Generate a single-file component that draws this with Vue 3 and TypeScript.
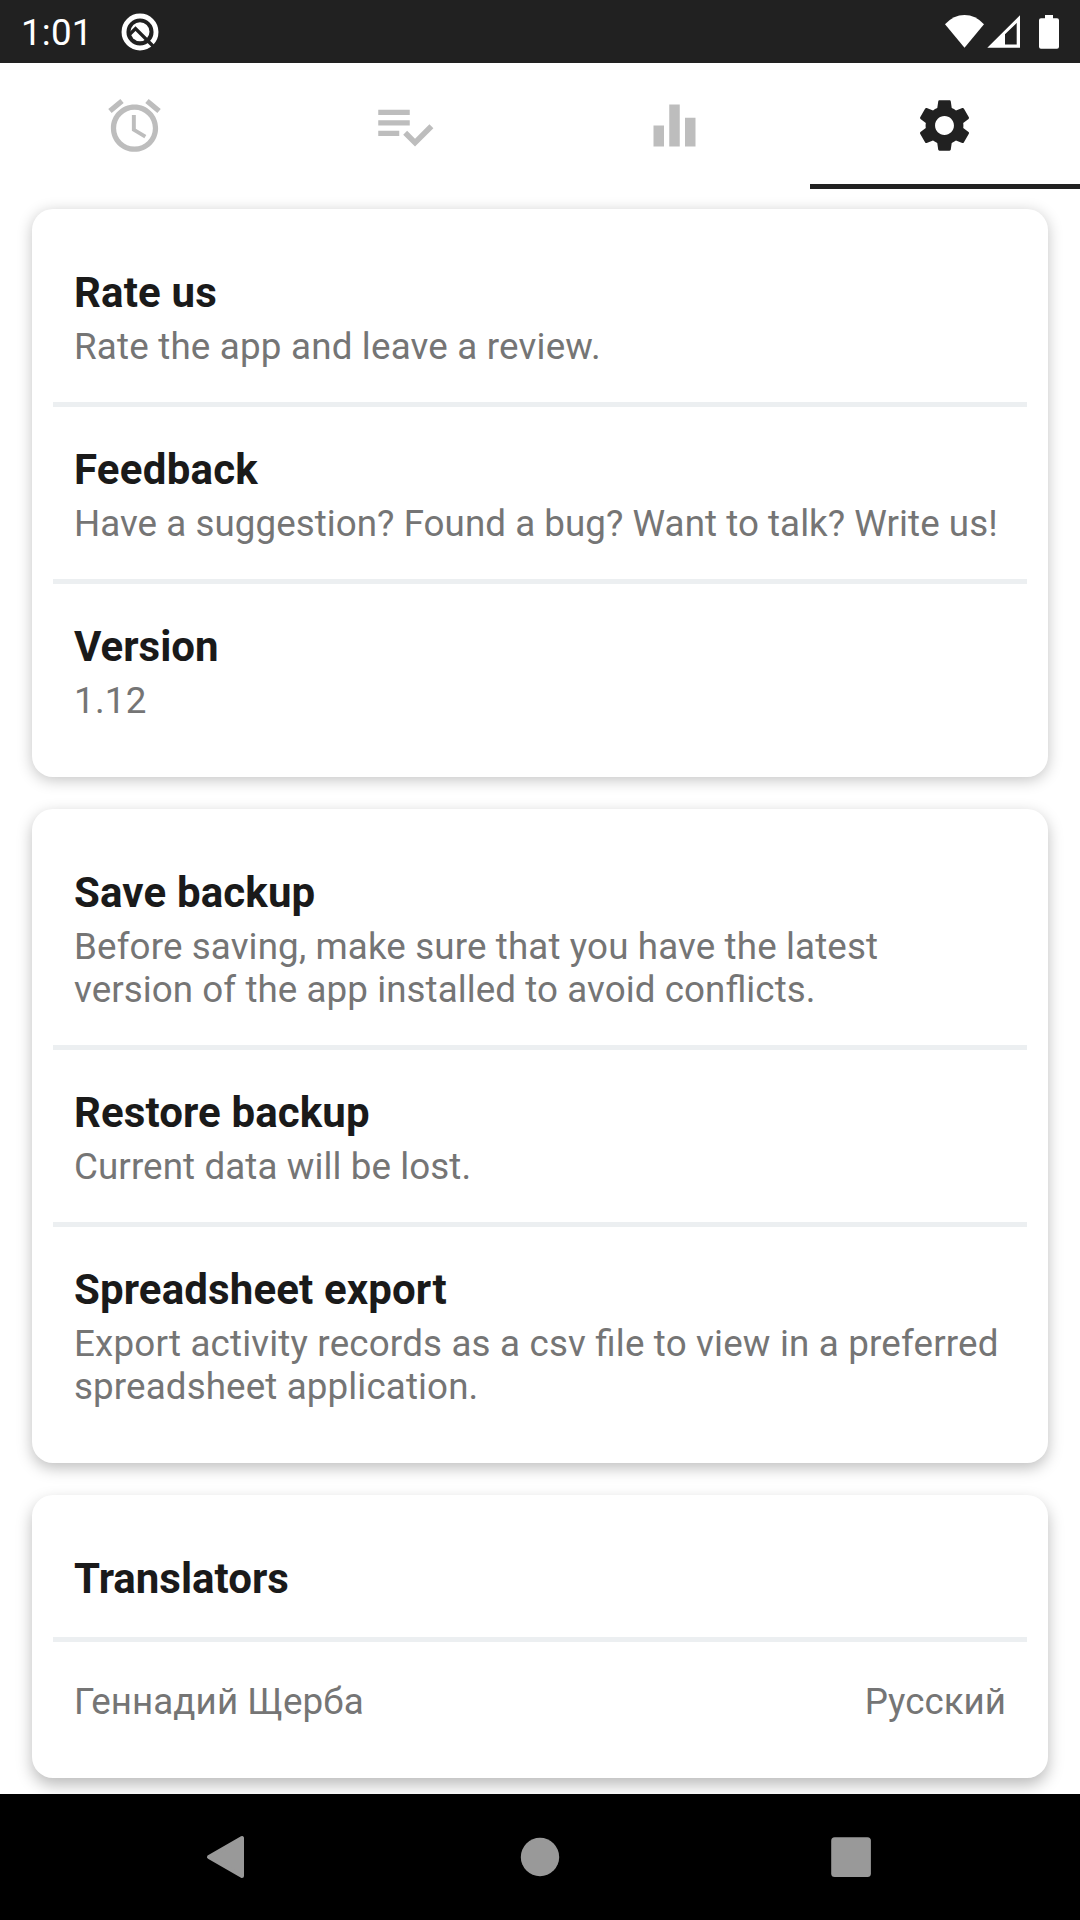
<script setup lang="ts">
interface Tab {
  name: string
  path: string
  active?: boolean
}
interface Line {
  text: string
  track: number
}
interface Item {
  title: string
  track: number
  lines: Line[]
}

const tabs: Tab[] = [
  {
    name: 'timers',
    path: 'M22 5.72l-4.6-3.86-1.29 1.53 4.6 3.86L22 5.72zM7.88 3.39L6.6 1.86 2 5.71l1.29 1.53 4.59-3.85zM12.5 8H11v6l4.75 2.85.75-1.23-4-2.37V8zM12 4c-4.97 0-9 4.03-9 9s4.02 9 9 9c4.97 0 9-4.03 9-9s-4.03-9-9-9zm0 16c-3.87 0-7-3.13-7-7s3.13-7 7-7 7 3.13 7 7-3.13 7-7 7z',
  },
  {
    name: 'records',
    path: 'M14 10H2v2h12v-2zm0-4H2v2h12V6zM2 16h8v-2H2v2zm19.5-4.5L23 13l-6.99 7-4.51-4.5L13 14l3.01 3 5.49-5.5z',
  },
  { name: 'statistics', path: 'M10 20h4V4h-4v16zm-6 0h4v-8H4v8zM16 9v11h4V9h-4z' },
  {
    name: 'settings',
    active: true,
    path: 'M19.14 12.94c.04-.3.06-.61.06-.94 0-.32-.02-.64-.07-.94l2.03-1.58c.18-.14.23-.41.12-.61l-1.92-3.32c-.12-.22-.37-.29-.59-.22l-2.39.96c-.5-.38-1.03-.7-1.62-.94l-.36-2.54c-.04-.24-.24-.41-.48-.41h-3.84c-.24 0-.43.17-.47.41l-.36 2.54c-.59.24-1.13.57-1.62.94l-2.39-.96c-.22-.08-.47 0-.59.22L2.74 8.87c-.12.21-.08.47.12.61l2.03 1.58c-.05.3-.09.63-.09.94s.02.64.07.94l-2.03 1.58c-.18.14-.23.41-.12.61l1.92 3.32c.12.22.37.29.59.22l2.39-.96c.5.38 1.03.7 1.62.94l.36 2.54c.05.24.24.41.48.41h3.84c.24 0 .44-.17.47-.41l.36-2.54c.59-.24 1.13-.56 1.62-.94l2.39.96c.22.08.47 0 .59-.22l1.92-3.32c.12-.22.07-.47-.12-.61l-2.01-1.58zM12 15.6c-1.98 0-3.6-1.62-3.6-3.6s1.62-3.6 3.6-3.6 3.6 1.62 3.6 3.6-1.62 3.6-3.6 3.6z',
  },
]

// track: letter spacing in px for each run of text
const groups: Item[][] = [
  [
    { title: 'Rate us', track: 0.15, lines: [{ text: 'Rate the app and leave a review.', track: 0.19 }] },
    {
      title: 'Feedback',
      track: 0.25,
      lines: [{ text: 'Have a suggestion? Found a bug? Want to talk? Write us!', track: 0.04 }],
    },
    { title: 'Version', track: 0, lines: [{ text: '1.12', track: 0.25 }] },
  ],
  [
    {
      title: 'Save backup',
      track: 0.15,
      lines: [
        { text: 'Before saving, make sure that you have the latest', track: 0.13 },
        { text: 'version of the app installed to avoid conflicts.', track: 0.07 },
      ],
    },
    { title: 'Restore backup', track: 0.1, lines: [{ text: 'Current data will be lost.', track: 0.09 }] },
    {
      title: 'Spreadsheet export',
      track: 0.13,
      lines: [
        { text: 'Export activity records as a csv file to view in a preferred', track: 0.17 },
        { text: 'spreadsheet application.', track: 0.12 },
      ],
    },
  ],
]

const translators = [{ name: 'Геннадий Щерба', language: 'Русский', track: 0.08 }]

const spacing = (track: number) => ({ letterSpacing: `${track}px` })
</script>

<template>
  <div class="screen">
    <header class="status">
      <span class="clock">1:01</span>
      <svg class="q-icon" width="38" height="38" viewBox="0 0 38 38">
        <circle cx="19" cy="19" r="16" fill="none" stroke="#fff" stroke-width="4.9" />
        <circle cx="19" cy="18.700" r="9.500" fill="#fff" />
        <path d="M8.500 21.500L14.500 15.500L33 34" fill="none" stroke="#212121" stroke-width="3.300" />
      </svg>
      <svg class="system" width="116" height="36" viewBox="944 13 116 36">
        <path d="M945 23.300Q953.500 14 964.500 14T984 23.300L964.500 46.700z" fill="#fff" />
        <path
          d="M987.300 46.700L1020 14.300V46.700zM1005 33.300V43.500H1016.700V22z"
          fill="#fff"
          fill-rule="evenodd"
        />
        <path
          d="M1045 14h8v3.300h4a2 2 0 0 1 2 2V45.800a2 2 0 0 1-2 2h-16a2 2 0 0 1-2-2V19.300a2 2 0 0 1 2-2h4z"
          fill="#fff"
        />
      </svg>
    </header>

    <nav class="tabs">
      <div v-for="tab in tabs" :key="tab.name" class="tab" :class="{ active: tab.active }">
        <svg width="63" height="63" viewBox="0 0 24 24"><path :d="tab.path" fill="currentColor" /></svg>
      </div>
    </nav>

    <main class="content">
      <section v-for="(group, g) in groups" :key="g" class="card" :class="`level-${g + 1}`">
        <div v-for="item in group" :key="item.title" class="item">
          <h2 :style="spacing(item.track)">{{ item.title }}</h2>
          <p>
            <span v-for="line in item.lines" :key="line.text" class="line" :style="spacing(line.track)">{{
              line.text
            }}</span>
          </p>
        </div>
      </section>
      <section class="card level-3">
        <div class="item"><h2>Translators</h2></div>
        <div v-for="person in translators" :key="person.name" class="item person">
          <span :style="spacing(person.track)">{{ person.name }}</span>
          <span>{{ person.language }}</span>
        </div>
      </section>
    </main>

    <footer class="navbar">
      <svg width="1080" height="126" viewBox="0 0 1080 126">
        <g fill="#999">
          <path d="M209 63L242 44V82z" stroke="#999" stroke-width="4" stroke-linejoin="round" />
          <circle cx="540" cy="63" r="19.200" />
          <rect x="831.200" y="43.200" width="39.700" height="39.700" rx="3.500" />
        </g>
      </svg>
    </footer>
  </div>
</template>

<style>
body {
  margin: 0;
  background: #fff;
}
</style>

<style scoped>
.screen {
  display: flex;
  flex-direction: column;
  width: 1080px;
  height: 1920px;
  overflow: hidden;
  background: #fff;
  font-family: Roboto, sans-serif;
  font-feature-settings: 'liga' 1;
}
.status {
  display: flex;
  align-items: center;
  flex: 0 0 63px;
  box-sizing: border-box;
  padding: 0 20px 0 21px;
  background: #212121;
}
.clock {
  width: 100px;
  padding-top: 2px;
  font-size: 36.75px;
  line-height: 43px;
  letter-spacing: 0.2px;
  color: #fff;
}
.q-icon {
  display: block;
}
.system {
  display: block;
  margin-left: auto;
}
.tabs {
  display: flex;
  flex: 0 0 126px;
}
.tab {
  display: flex;
  flex: 1;
  align-items: center;
  justify-content: center;
  box-sizing: border-box;
  color: #bdbdbd;
}
.tab svg {
  display: block;
  margin: 0 1px 1px 0;
}
.tab.active {
  color: #212121;
  box-shadow: inset 0 -5px #212121;
}
.content {
  display: flex;
  flex: 1;
  flex-direction: column;
  gap: 32px;
  padding: 20px 32px 0;
  overflow: hidden;
}
.card {
  flex: none;
  box-sizing: border-box;
  padding: 21px;
  border-radius: 21px;
  background: #fff;
}
.level-1 {
  box-shadow: 0 3px 15px rgba(0, 0, 0, 0.24);
}
.level-2 {
  box-shadow: 0 5px 15px rgba(0, 0, 0, 0.26);
}
.level-3 {
  box-shadow: 0 7px 16px rgba(0, 0, 0, 0.27);
}
.item {
  padding: 38px 21px 34px;
  font-size: 36.75px;
  line-height: 43px;
  color: #757575;
}
.item + .item {
  border-top: 5px solid #eceff1;
}
h2 {
  margin: 0;
  font-size: 42px;
  font-weight: 700;
  line-height: 49px;
  color: #1a1a1a;
}
p {
  margin: 8px 0 0;
}
.line {
  display: block;
  white-space: nowrap;
}
.person {
  display: flex;
  justify-content: space-between;
}
.navbar {
  flex: 0 0 126px;
  background: #000;
}
.navbar svg {
  display: block;
}
</style>
